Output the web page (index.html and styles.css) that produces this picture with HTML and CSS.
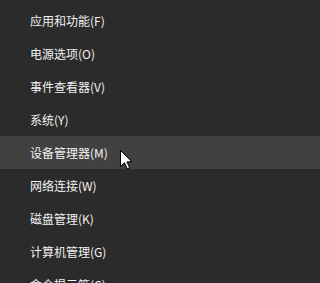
FILE: index.html
```html
<!DOCTYPE html>
<html lang="zh-CN">
<head>
<meta charset="utf-8">
<link rel="stylesheet" href="styles.css">
</head>
<body>
<ul class="menu">
  <li class="item">应用和功能(F)</li>
  <li class="item">电源选项(O)</li>
  <li class="item">事件查看器(V)</li>
  <li class="item">系统(Y)</li>
  <li class="item item--hover">设备管理器(M)
    <svg class="cursor" width="13" height="20" viewBox="0 0 13 20"><path d="M0.5 0.5 L0.5 16.5 L4.5 12.7 L7.2 18.8 L9.6 17.8 L7 11.8 L12 11.8 Z" fill="#fff" stroke="#000" stroke-width="1" stroke-linejoin="miter"/></svg>
  </li>
  <li class="item">网络连接(W)</li>
  <li class="item">磁盘管理(K)</li>
  <li class="item">计算机管理(G)</li>
  <li class="item">命令提示符(C)</li>
</ul>
</body>
</html>
```
FILE: styles.css
```css
html, body {
  margin: 0;
  padding: 0;
  background: #2b2b2b;
  height: 100%;
  overflow: hidden;
}
.menu {
  list-style: none;
  margin: 0;
  padding: 4px 0 0 0;
  font-family: "Noto Sans CJK SC", "Microsoft YaHei", sans-serif;
  font-size: 12px;
  color: #f2f2f2;
}
.item {
  position: relative;
  height: 33px;
  line-height: 33px;
  padding-left: 30px;
  white-space: nowrap;
}
.item--hover {
  background: #414141;
}
.cursor {
  position: absolute;
  left: 120px;
  top: 14px;
}
```
